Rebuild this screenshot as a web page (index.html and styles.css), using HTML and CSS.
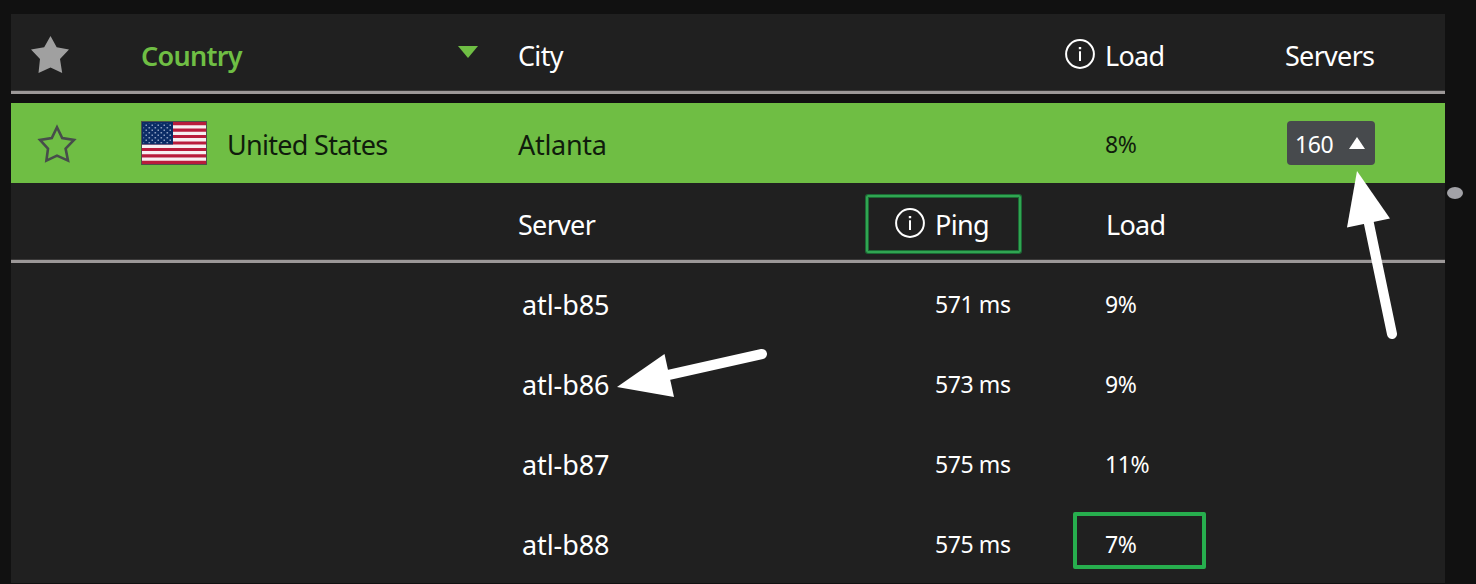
FILE: index.html
```
<!DOCTYPE html>
<html lang="en">
  <head>
    <meta charset="utf-8">
    <meta name="viewport" content="width=device-width, initial-scale=1">
    <title>Servers</title>
    <link rel="stylesheet" href="styles.css">
  </head>
  <body>
    <svg class="symbols" width="0" height="0">
      <symbol id="info" viewBox="0 0 30 30">
        <circle cx="15" cy="15" r="13.9" fill="none" stroke="#fff" stroke-width="2"/>
        <path d="M14 12.2h2V22h-2zM13.8 8h2.4v2.2h-2.4z" fill="#fff"/>
      </symbol>
      <pattern id="flag-stars" width="6" height="5" patternUnits="userSpaceOnUse">
        <path d="M1.5 1h1.6v1.4H1.5zM4.5 3.5h1.6v1.4H4.5z" fill="#8b9dc0"/>
      </pattern>
    </svg>
    <div class="list">
      <div class="row row--head">
        <div class="cell">
          <svg class="star star--head" viewBox="0 0 38 37">
            <path d="M19.5 0L25.7 11.2L38 13.5L29 23L31.2 37L19.5 31.6L7.5 37L9 23L0 13.5L13.2 11.2Z" fill="#a0a0a0"/>
          </svg>
        </div>
        <div class="cell cell--sorted">
          <span class="country-title">Country</span>
          <svg class="sort" viewBox="0 0 20 12"><path d="M0 0H20L10 12Z" fill="#6fbe44"/></svg>
        </div>
        <div class="cell cell--wide"><span class="city-title">City</span></div>
        <div class="cell">
          <svg class="info"><use href="#info"/></svg>
          <span class="load-title">Load</span>
        </div>
        <div class="cell"><span class="servers-title">Servers</span></div>
      </div>

      <div class="row row--active">
        <div class="cell">
          <svg class="star star--active" viewBox="0 0 40 39">
            <path d="M20 3.2L25.2 14.1L37 16L28.6 24.6L31 36.6L20 31.6L9.4 36.6L11 24.6L3 16L14.8 14.1Z" fill="none" stroke="#474d4b" stroke-width="2.6"/>
          </svg>
        </div>
        <div class="cell">
          <svg class="flag" viewBox="0 0 66 44">
            <rect width="66" height="44" fill="#4c5148"/>
            <rect x="1" y="1" width="64" height="42" fill="#f7f0f2"/>
            <path d="M1 2.6h64M1 9.1h64M1 15.5h64M1 22h64M1 28.5h64M1 34.9h64M1 41.4h64" stroke="#b91c3c" stroke-width="3.2"/>
            <rect x="1" y="1" width="31" height="22.5" fill="#0b2c66"/>
            <rect x="2.5" y="2.5" width="28" height="20" fill="url(#flag-stars)"/>
          </svg>
          <span class="country">United States</span>
        </div>
        <div class="cell cell--wide"><span class="city">Atlanta</span></div>
        <div class="cell cell--small"><span>8%</span></div>
        <div class="cell cell--small">
          <div class="toggle">
            <span>160</span>
            <svg class="toggle__arrow" viewBox="0 0 16 12"><path d="M8 0L16 12H0Z" fill="#fff"/></svg>
          </div>
        </div>
      </div>

      <div class="row row--subhead">
        <div class="cell cell--server"><span class="server-title">Server</span></div>
        <div class="cell cell--ping">
          <svg class="info"><use href="#info"/></svg>
          <span class="ping-title">Ping</span>
        </div>
        <div class="cell"><span class="load-title load-title--sub">Load</span></div>
      </div>

      <div class="row">
        <div class="cell cell--server cell--name"><span>atl-b85</span></div>
        <div class="cell cell--small"><span>571 ms</span></div>
        <div class="cell cell--small"><span>9%</span></div>
      </div>
      <div class="row">
        <div class="cell cell--server cell--name"><span>atl-b86</span></div>
        <div class="cell cell--small"><span>573 ms</span></div>
        <div class="cell cell--small"><span>9%</span></div>
      </div>
      <div class="row">
        <div class="cell cell--server cell--name"><span>atl-b87</span></div>
        <div class="cell cell--small"><span>575 ms</span></div>
        <div class="cell cell--small"><span>11%</span></div>
      </div>
      <div class="row">
        <div class="cell cell--server cell--name"><span>atl-b88</span></div>
        <div class="cell cell--small"><span>575 ms</span></div>
        <div class="cell cell--small"><span>7%</span></div>
      </div>
    </div>

    <div class="scroll"></div>

    <!-- marks over the list -->
    <div class="mark mark--ping"></div>
    <div class="mark mark--load"></div>
    <svg class="arrows" viewBox="0 0 1476 584">
      <path d="M1357 171L1390 218.5L1347 227.5Z" fill="#fff"/>
      <path d="M1368 219L1392 334" stroke="#fff" stroke-width="10" stroke-linecap="round"/>
      <path d="M617 387L664.5 354L674 397Z" fill="#fff"/>
      <path d="M666 375.5L762 354" stroke="#fff" stroke-width="10" stroke-linecap="round"/>
    </svg>
  </body>
</html>
```
FILE: styles.css
```
body {
  margin: 0;
  height: 584px;
  overflow: hidden;
  box-sizing: border-box;
  padding: 14px 0 0 11px;
  display: flex;
  align-items: flex-start;
  background: #111;
  color: #fff;
  font-family: "Noto Sans", "Open Sans", sans-serif;
  font-size: 27px;
  line-height: 36px;
  white-space: nowrap;
}

.symbols {
  position: absolute;
}

.list {
  width: 1434px;
  flex: none;
}

.row {
  display: grid;
  grid-template-columns: 130px 377px 417px 170px 180px 160px;
  height: 80px;
  box-sizing: border-box;
  background: #202020;
}

.row--head,
.row--subhead {
  border-bottom: 3px solid #9c9898;
  box-shadow: inset 0 -1px #3a3939;
}

.row--head {
  margin-bottom: 9px;
}

.row--active {
  background: #6fbe44;
  color: #101c0c;
}

.cell {
  display: flex;
  align-items: center;
  padding-top: 4px;
  letter-spacing: -0.7px;
}

.row--head .cell {
  padding-top: 7px;
}

.row--subhead .cell {
  padding-top: 6px;
}

.cell--wide {
  grid-column: 3 / 5;
}

.row--head .cell--wide,
.row--active .cell--wide {
  grid-column: 3;
}

.row--head .cell--wide + .cell,
.row--active .cell--wide + .cell {
  grid-column: 5;
}

.cell--server {
  grid-column: 3;
}

.cell.cell--name {
  padding-left: 4px;
  letter-spacing: -0.1px;
}

.cell.cell--small {
  padding-top: 2px;
  font-size: 23px;
  letter-spacing: -0.4px;
}

.cell--sorted {
  justify-content: space-between;
  padding-right: 40px;
  color: #6fbe44;
  font-weight: 600;
}

.city {
  letter-spacing: -0.3px;
}

.star {
  flex: none;
}

.star--head {
  width: 38px;
  height: 37px;
  margin: -4px 0 0 20px;
}

.star--active {
  width: 40px;
  height: 39px;
  margin: -3px 0 0 26px;
}

.sort {
  width: 20px;
  height: 12px;
  margin-top: -9px;
}

.info {
  flex: none;
  width: 30px;
  height: 30px;
  margin: -4px 10px 0 -40px;
}

.flag {
  flex: none;
  width: 66px;
  height: 44px;
  margin: -4px 20px 0 0;
}

.toggle {
  display: flex;
  align-items: center;
  justify-content: space-between;
  width: 88px;
  height: 44px;
  margin: -2px 0 0 2px;
  padding: 2px 10px 0 8px;
  box-sizing: border-box;
  border-radius: 4px;
  background: #474a4d;
  color: #fff;
}

.toggle__arrow {
  width: 16px;
  height: 12px;
  margin-top: -2px;
}

.load-title--sub {
  margin-left: 1px;
}

.scroll {
  width: 16px;
  height: 12px;
  margin: 173px 0 0 2px;
  border-radius: 50%;
  background: #a2a2a7;
}

.mark {
  position: absolute;
  box-sizing: border-box;
  border-radius: 2px;
}

.mark--ping {
  left: 866px;
  top: 195px;
  width: 155px;
  height: 58px;
  border: 2px solid #30a552;
  box-shadow: 0 0 0 1px #1b6a34, inset 0 0 0 1px #1b6a34;
}

.mark--load {
  left: 1073px;
  top: 512px;
  width: 133px;
  height: 57px;
  border: 4px solid #27ae4e;
}

.arrows {
  position: absolute;
  left: 0;
  top: 0;
  width: 1476px;
  height: 584px;
}
```
